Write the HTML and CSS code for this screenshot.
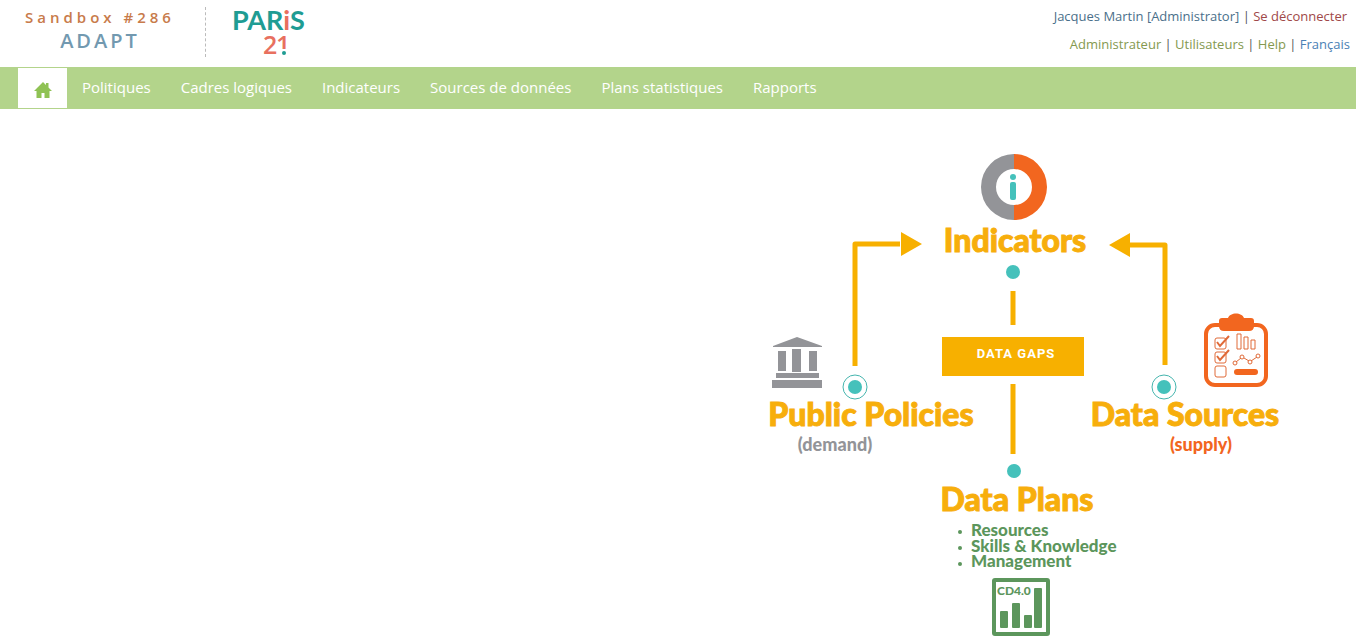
FILE: index.html
```html
<!DOCTYPE html>
<html lang="fr">
<head>
<meta charset="utf-8">
<meta name="viewport" content="width=device-width, initial-scale=1">
<title>ADAPT</title>
<link rel="stylesheet" href="styles.css">
</head>
<body>
<header class="header">
  <div class="brand">
    <span class="brand-instance">Sandbox #286</span>
    <span class="brand-name">ADAPT</span>
  </div>
  <svg class="logo" viewBox="0 0 76 58" role="img" aria-label="PARIS 21">
    <text class="logo-teal" x="0" y="30">PAR<tspan class="logo-coral">i</tspan>S</text>
    <text class="logo-coral logo-number" x="31" y="54">2<tspan x="44">1</tspan></text>
    <rect class="logo-gap" x="46" y="49" width="10" height="6"/>
    <circle class="logo-dot" cx="52" cy="53" r="2"/>
  </svg>
  <div class="account">
    <div class="account-row account-user"><a class="user" href="#">Jacques Martin [Administrator]</a> | <a class="logout" href="#">Se déconnecter</a></div>
    <div class="account-row"><a class="tool" href="#">Administrateur</a> | <a class="tool" href="#">Utilisateurs</a> | <a class="tool" href="#">Help</a> | <a class="language" href="#">Français</a></div>
  </div>
</header>
<nav class="nav">
  <a class="home" href="#" aria-label="Accueil">
    <svg class="home-icon" viewBox="0 0 18 16"><path d="M9 0L12 3V1H14.500V5.500L18 9H15.500V16H10.500V11H7.500V16H2.500V9H0Z"/></svg>
  </a>
  <a class="nav-link" href="#">Politiques</a>
  <a class="nav-link" href="#">Cadres logiques</a>
  <a class="nav-link" href="#">Indicateurs</a>
  <a class="nav-link" href="#">Sources de données</a>
  <a class="nav-link" href="#">Plans statistiques</a>
  <a class="nav-link" href="#">Rapports</a>
</nav>
<main class="main">
  <svg class="diagram" viewBox="760 140 540 500">
    <!-- Indicators -->
    <path class="gray" d="M1014 154A33 33 0 0 0 1014 220V205A18 18 0 0 1 1014 169Z"/>
    <path class="orange" d="M1014 154A33 33 0 0 1 1014 220V205A18 18 0 0 0 1014 169Z"/>
    <circle class="teal" cx="1013" cy="177" r="3"/>
    <rect class="teal" x="1010" y="182" width="6" height="18" rx="2"/>
    <text class="title" x="1015" y="252">Indicators</text>

    <!-- Connectors -->
    <path class="connector" d="M855 366V244H900M1165 365V245H1130"/>
    <path class="amber" d="M901 232L922 244L901 256ZM1130 233L1109 245L1130 257Z"/>
    <path class="connector" d="M1013 291V325M1013 384V454"/>
    <circle class="teal" cx="1013" cy="272" r="7"/>
    <circle class="teal" cx="1014" cy="471" r="7"/>
    <circle class="teal" cx="855" cy="387" r="7"/>
    <circle class="ring" cx="855" cy="387" r="12"/>
    <circle class="teal" cx="1164" cy="387" r="7"/>
    <circle class="ring" cx="1164" cy="387" r="12"/>
    <rect class="amber" x="942" y="337" width="142" height="39"/>
    <text class="gaps" x="1016" y="358">DATA GAPS</text>

    <!-- Public policies -->
    <path class="gray" d="M773 346L797 337L822 346V347H773ZM778 351H786V371H778ZM792 349H801V372H792ZM809 351H817V371H809ZM776 373H819V378H776ZM772 380H822V388H772Z"/>
    <text class="title" x="871" y="426">Public Policies</text>
    <text class="note gray" x="835" y="451">(demand)</text>

    <!-- Data sources -->
    <rect class="board" x="1206" y="325" width="60" height="60" rx="9"/>
    <path class="orange" d="M1222 318H1228C1230 312 1242 312 1244 318H1251Q1254 318 1254 321V326Q1254 331 1249 331H1224Q1219 331 1219 326V321Q1219 318 1222 318Z"/>
    <g class="thin">
      <rect x="1215" y="338" width="11" height="11" rx="2"/>
      <rect x="1215" y="352" width="11" height="11" rx="2"/>
      <rect x="1215" y="366" width="11" height="11" rx="2"/>
      <path d="M1237 334H1241V349H1237ZM1244 337H1248V349H1244ZM1251 340H1255V349H1251Z"/>
      <path d="M1236 362L1241 358M1244 358L1249 361M1251 361L1257 357"/>
      <circle cx="1235" cy="363" r="2"/><circle cx="1242" cy="357" r="2"/><circle cx="1250" cy="362" r="2"/><circle cx="1258" cy="356" r="2"/>
    </g>
    <path class="tick" d="M1217 342L1220 346L1229 336M1217 356L1220 360L1229 350"/>
    <rect class="orange" x="1234" y="369" width="24" height="6" rx="3"/>
    <text class="title" x="1185" y="426">Data Sources</text>
    <text class="note orange" x="1201" y="451">(supply)</text>

    <!-- Data plans -->
    <text class="title" x="1017" y="511">Data Plans</text>
    <g class="green">
      <circle cx="960" cy="532" r="2"/><circle cx="960" cy="548" r="2"/><circle cx="960" cy="564" r="2"/>
      <text class="item" x="971" y="536">Resources</text>
      <text class="item" x="971" y="552">Skills &amp; Knowledge</text>
      <text class="item" x="971" y="567">Management</text>
      <text class="code" x="997" y="595">CD4.0</text>
      <rect x="1000" y="611" width="8" height="17" rx="1"/>
      <rect x="1012" y="603" width="8" height="25" rx="1"/>
      <rect x="1024" y="615" width="8" height="13" rx="1"/>
      <rect x="1034" y="588" width="8" height="40" rx="1"/>
    </g>
    <rect class="chart-frame" x="994" y="580" width="54" height="54" rx="1"/>
  </svg>
</main>
</body>
</html>
```
FILE: styles.css
```css
* { box-sizing: border-box; }
body {
  margin: 0;
  background: #fff;
  font-family: "Open Sans", "Noto Sans", sans-serif;
  font-size: 13px;
  color: #555;
}
a { text-decoration: none; }

.header { display: flex; align-items: flex-start; min-height: 67px; }
.brand {
  display: flex;
  flex-direction: column;
  align-items: center;
  width: 206px;
  height: 50px;
  margin-top: 7px;
  padding-right: 5px;
  border-right: 1px dashed #bbb;
  white-space: nowrap;
}
.brand-instance { font-size: 15px; line-height: 20px; letter-spacing: 4px; color: #c87b4b; font-weight: 600; }
.brand-name { font-size: 20px; line-height: 28px; letter-spacing: 3px; color: #7299b0; font-weight: 600; }

.logo { width: 76px; height: 58px; margin-left: 26px; font-family: Lato, sans-serif; font-size: 27px; font-weight: 700; }
.logo-teal { fill: #1f9c93; }
.logo-coral { fill: #e8705f; }
.logo-number { font-family: "Open Sans", sans-serif; font-size: 25px; font-weight: 600; }
.logo-gap { fill: #fff; }
.logo-dot { fill: #1f9c93; }

.account { margin-left: auto; padding: 6px 6px 0 0; text-align: right; }
.account-row { line-height: 20px; white-space: nowrap; }
.account-user { margin-bottom: 8px; padding-right: 3px; }
.user { color: #4a6f8a; }
.logout { color: #a04848; }
.tool { color: #84994f; }
.language { color: #4a7fb5; }

.nav { display: flex; align-items: stretch; min-height: 42px; padding: 1px 18px; background: #b3d48b; }
.home { display: flex; align-items: center; justify-content: center; width: 49px; padding-top: 4px; background: #fff; }
.home-icon { width: 18px; height: 16px; fill: #8fc254; }
.nav-link { padding: 0 15px; font-size: 15px; line-height: 38px; color: #fff; white-space: nowrap; }

.main { display: flex; justify-content: flex-end; padding: 31px 56px 0 0; }
.diagram { display: block; width: 540px; height: 500px; font-family: Lato, sans-serif; font-weight: 900; }
.gray { fill: #939498; }
.orange { fill: #f2661f; }
.teal { fill: #45c1bb; }
.amber { fill: #f7b000; }
.green { fill: #5c965c; }
.ring { fill: none; stroke: #45b5ae; stroke-width: 1; }
.connector { fill: none; stroke: #f7b000; stroke-width: 5; stroke-linejoin: round; }
.title { fill: #f7ae0c; stroke: #f7ae0c; stroke-width: 1; font-size: 32px; text-anchor: middle; }
.note { font-size: 18px; text-anchor: middle; }
.item { font-size: 17px; }
.code { font-size: 12px; }
.gaps { fill: #fff; font-family: Roboto, sans-serif; font-size: 13px; font-weight: 700; letter-spacing: 1px; text-anchor: middle; }
.board { fill: none; stroke: #f2661f; stroke-width: 4; }
.thin { fill: none; stroke: #e06a38; stroke-width: 1; }
.tick { fill: none; stroke: #e06a38; stroke-width: 2; }
.chart-frame { fill: none; stroke: #5c965c; stroke-width: 4; }
```
